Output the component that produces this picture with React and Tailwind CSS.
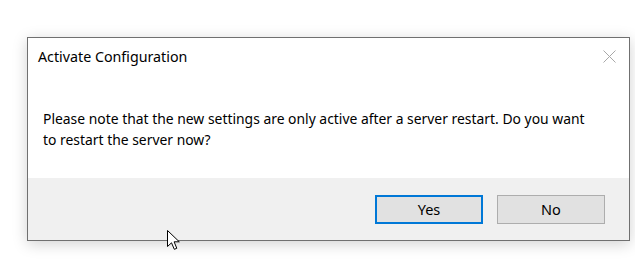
export default function App() {
  return (
    <div
      className="relative min-h-screen bg-white pl-[27px] pt-[37px] text-black"
      style={{ fontFamily: '"Noto Sans", "Open Sans", sans-serif' }}
    >
      <div className="flex h-[204px] w-[603px] flex-col border border-[#707070] bg-white shadow-[0_3px_14px_rgba(0,0,0,0.18)]">
        {/* title row */}
        <div className="flex items-start justify-between pl-[10px] pr-[13px] pt-[9px]">
          <span className="text-[14.25px] leading-[20px]">Activate Configuration</span>
          <svg width="13" height="13" viewBox="0 0 13 13" className="mt-[3px]">
            <path d="M0.5 0.5 L12.5 12.5 M12.5 0.5 L0.5 12.5" stroke="#a8a8a8" strokeWidth="1" />
          </svg>
        </div>

        {/* message */}
        <p className="whitespace-nowrap pl-[15px] pt-[41px] text-[13.9px] leading-[21px]">
          Please note that the new settings are only active after a server restart. Do you want
          <br />
          to restart the server now?
        </p>

        {/* footer */}
        <div className="mt-auto flex h-[62px] items-center justify-end gap-[14px] bg-[#f0f0f0] pr-[24px]">
          <button className="h-[29px] w-[108px] border-2 border-[#0078d7] bg-[#e1e1e1] text-[14.5px] leading-none">
            Yes
          </button>
          <button className="h-[29px] w-[108px] border border-[#adadad] bg-[#e1e1e1] text-[14.5px] leading-none">
            No
          </button>
        </div>
      </div>

      {/* mouse pointer */}
      <svg width="14" height="21" viewBox="0 0 14 21" className="absolute left-[167px] top-[230px]">
        <path
          d="M0.5 0.5 L0.5 16.5 L4.5 12.8 L7.3 19.3 L9.8 18.3 L7.1 11.8 L12.3 11.8 Z"
          fill="#fff"
          stroke="#000"
          strokeWidth="1"
          strokeLinejoin="miter"
        />
      </svg>
    </div>
  )
}
